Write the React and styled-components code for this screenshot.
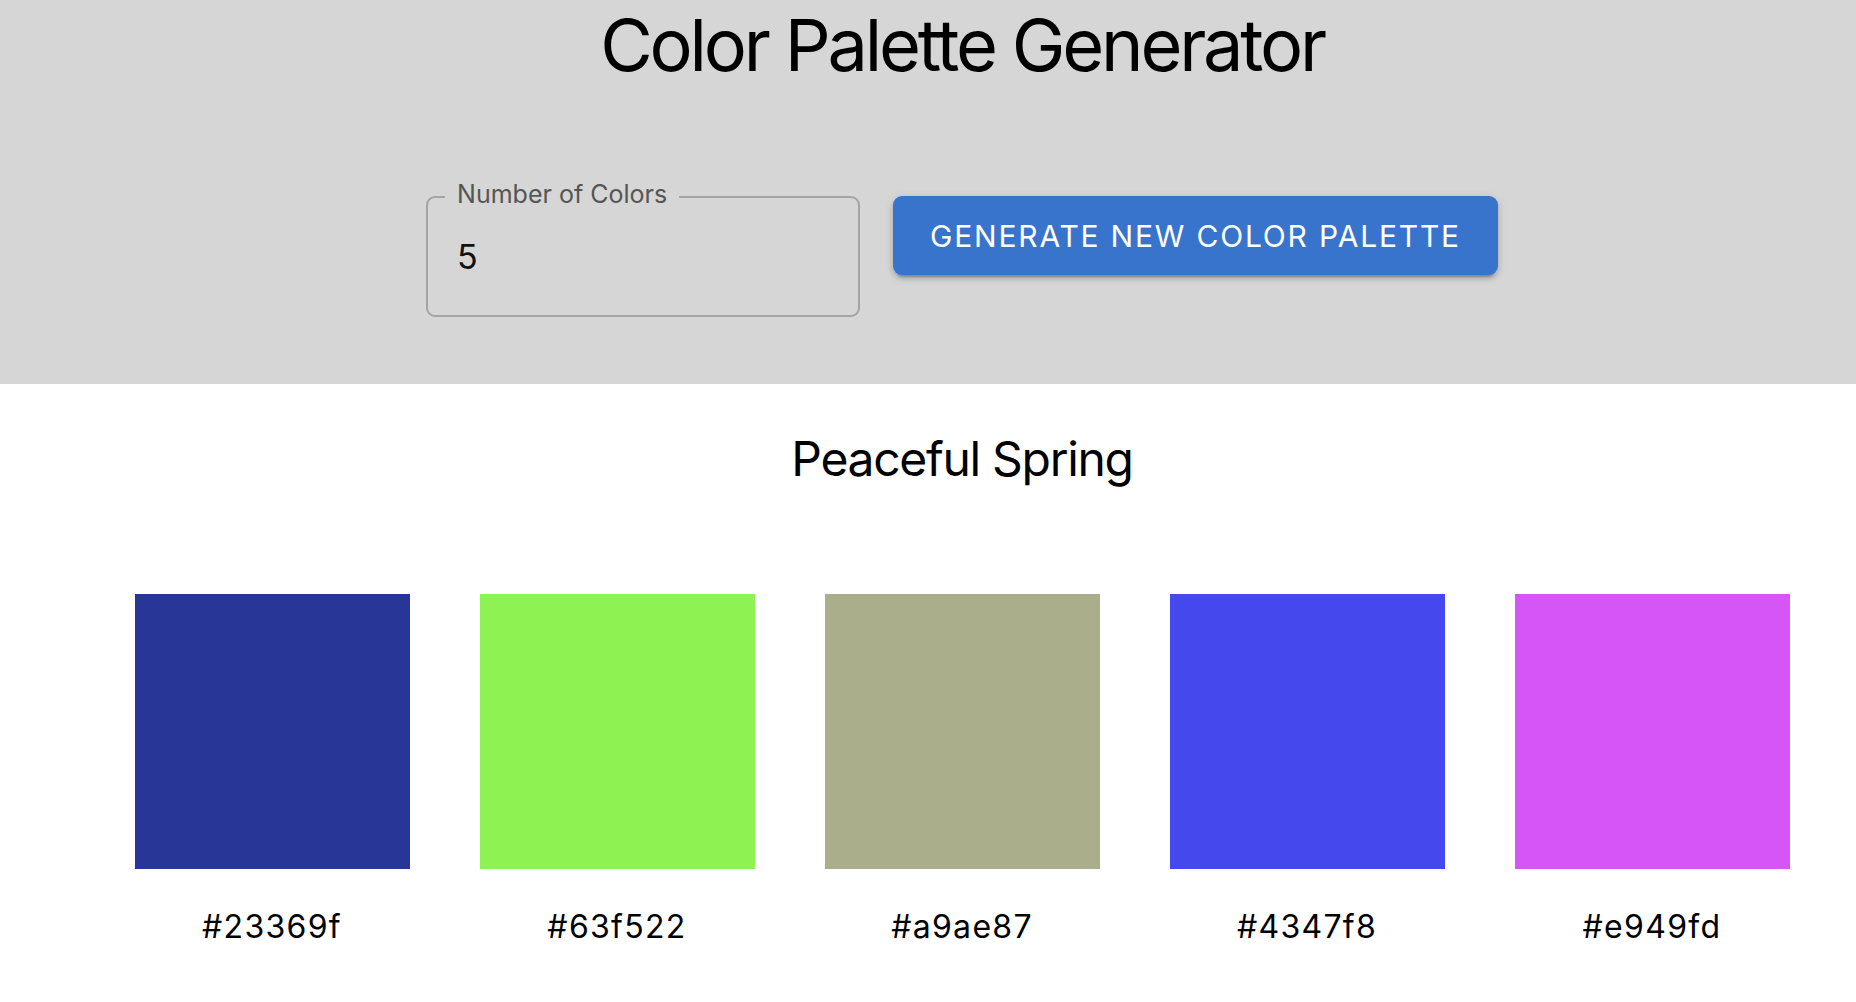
import React from "react";
import styled, { createGlobalStyle } from "styled-components";

const GlobalStyle = createGlobalStyle`
  html, body {
    margin: 0;
    padding: 0;
    background: #ffffff;
  }
  body {
    font-family: Inter, "Noto Sans", "Liberation Sans", sans-serif;
    color: #000000;
  }
  * { box-sizing: border-box; }
`;

const Page = styled.div`
  width: 100%;
  min-height: 1002px;
  background: #ffffff;
`;

const Header = styled.header`
  background: #d6d6d6;
  height: 384px;
  padding-left: 68px;
  display: flex;
  flex-direction: column;
  align-items: center;
`;

const Title = styled.h1`
  margin: 0;
  padding-top: 1px;
  font-size: 72px;
  line-height: 88px;
  font-weight: 400;
  letter-spacing: -3.2px;
  color: #000;
`;

const Controls = styled.div`
  margin-top: 107px;
  display: flex;
  align-items: flex-start;
  gap: 33px;
`;

const Field = styled.div`
  position: relative;
  width: 434px;
  height: 121px;
  border: 2px solid #a4a4a4;
  border-radius: 9px;
  display: flex;
  align-items: center;
`;

const FieldLabel = styled.span`
  position: absolute;
  left: 17px;
  top: -19px;
  padding: 0 12px;
  background: #d6d6d6;
  font-size: 25px;
  line-height: 30px;
  color: #555555;
  white-space: nowrap;
`;

const NumberInput = styled.input`
  width: 100%;
  border: none;
  outline: none;
  background: transparent;
  margin: 0;
  padding: 0 29px;
  font-family: inherit;
  font-size: 34px;
  line-height: 41px;
  height: 41px;
  color: #111111;
`;

const Button = styled.button`
  height: 79px;
  padding: 0 37px;
  border: none;
  border-radius: 9px;
  background: #3874cc;
  color: #ffffff;
  font-family: inherit;
  font-size: 30px;
  font-weight: 400;
  letter-spacing: 1.8px;
  text-transform: uppercase;
  box-shadow: 0 6px 2px -4px rgba(0, 0, 0, 0.2), 0 4px 5px 0 rgba(0, 0, 0, 0.14),
    0 2px 10px 0 rgba(0, 0, 0, 0.12);
  cursor: pointer;
`;

const PaletteSection = styled.section`
  padding-left: 68px;
  display: flex;
  flex-direction: column;
  align-items: center;
`;

const PaletteName = styled.h2`
  margin: 46px 0 0;
  font-size: 48px;
  line-height: 58px;
  font-weight: 400;
  letter-spacing: -1.3px;
`;

const SwatchRow = styled.div`
  margin-top: 106px;
  display: flex;
  gap: 70px;
  justify-content: center;
`;

const SwatchItem = styled.div`
  display: flex;
  flex-direction: column;
  align-items: center;
`;

const Swatch = styled.div`
  width: 275px;
  height: 275px;
  background: ${(p) => p.$color};
`;

const HexLabel = styled.div`
  margin-top: 38px;
  font-size: 32px;
  line-height: 39px;
  letter-spacing: 1.3px;
  color: #000;
`;

const colors = [
  { hex: "#23369f", shown: "#283697" },
  { hex: "#63f522", shown: "#8ff253" },
  { hex: "#a9ae87", shown: "#aaae8a" },
  { hex: "#4347f8", shown: "#4448ed" },
  { hex: "#e949fd", shown: "#d656f5" },
];

export default function App() {
  return (
    <Page>
      <GlobalStyle />
      <Header>
        <Title>Color Palette Generator</Title>
        <Controls>
          <Field>
            <FieldLabel>Number of Colors</FieldLabel>
            <NumberInput type="text" defaultValue="5" />
          </Field>
          <Button>Generate New Color Palette</Button>
        </Controls>
      </Header>
      <PaletteSection>
        <PaletteName>Peaceful Spring</PaletteName>
        <SwatchRow>
          {colors.map((c) => (
            <SwatchItem key={c.hex}>
              <Swatch $color={c.shown} />
              <HexLabel>{c.hex}</HexLabel>
            </SwatchItem>
          ))}
        </SwatchRow>
      </PaletteSection>
    </Page>
  );
}
